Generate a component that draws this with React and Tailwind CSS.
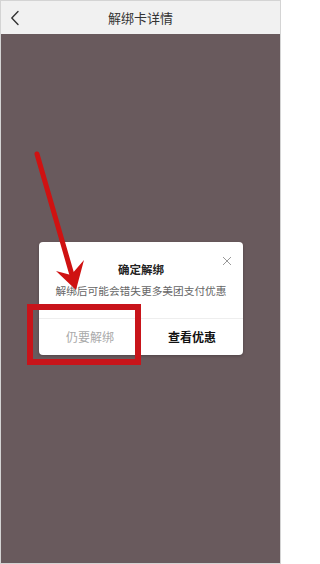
import React from 'react';

const font = { fontFamily: '"Noto Sans CJK SC", "Noto Sans", sans-serif' };

const Header = () => (
  <div className="h-[33px] shrink-0 bg-[#f1f1f1] flex items-center relative">
    <button className="w-[28px] h-[33px] flex items-center justify-center">
      <svg width="10" height="16" viewBox="0 0 10 16" fill="none">
        <path d="M8 1.5L1.8 8l6.2 6.5" stroke="#333" strokeWidth="1.4" strokeLinecap="round" strokeLinejoin="round" />
      </svg>
    </button>
    <div className="absolute inset-0 flex items-center justify-center pointer-events-none text-[13px] text-[#333]">
      解绑卡详情
    </div>
  </div>
);

const Dialog = () => (
  <div className="relative ml-[38px] w-[204px] bg-white rounded-[4px] shadow-[0_1px_3px_rgba(0,0,0,0.25)]">
    {/* close */}
    <svg className="absolute top-[14px] right-[11px]" width="10" height="10" viewBox="0 0 10 10">
      <path d="M1 1l8 8M9 1l-8 8" stroke="#999" strokeWidth="1" />
    </svg>
    <div className="pt-[19px] pb-[19px] px-[8px] flex flex-col items-center">
      <div className="h-[16px] leading-[16px] text-[11.5px] font-bold text-[#222]">确定解绑</div>
      <div className="mt-[6px] h-[16px] leading-[16px] text-[10.7px] text-[#666] whitespace-nowrap">解绑后可能会错失更多美团支付优惠</div>
    </div>
    <div className="h-[37px] border-t border-[#eeeeee] flex">
      <button className="flex-1 text-[12px] text-[#aaaaaa]">仍要解绑</button>
      <button className="flex-1 text-[12px] font-bold text-[#111]">查看优惠</button>
    </div>
  </div>
);

// red arrow + box drawn over the screenshot
const Annotation = () => (
  <svg className="absolute inset-0 pointer-events-none" width="281" height="564" viewBox="0 0 281 564">
    <line x1="36" y1="153" x2="71" y2="274" stroke="#cf1212" strokeWidth="5" strokeLinecap="round" />
    <polygon points="75,289 55,270 70,274 83,259" fill="#cf1212" />
    <rect x="29" y="306" width="108" height="55" fill="none" stroke="#c8141a" strokeWidth="6" />
  </svg>
);

export default function App() {
  return (
    <div style={font} className="relative w-[281px] h-[564px] flex flex-col bg-[#695a5d] border border-[#d4d4d4] box-border overflow-hidden">
      <Header />
      <div className="flex-1 pt-[208px]">
        <Dialog />
      </div>
      <Annotation />
    </div>
  );
}
